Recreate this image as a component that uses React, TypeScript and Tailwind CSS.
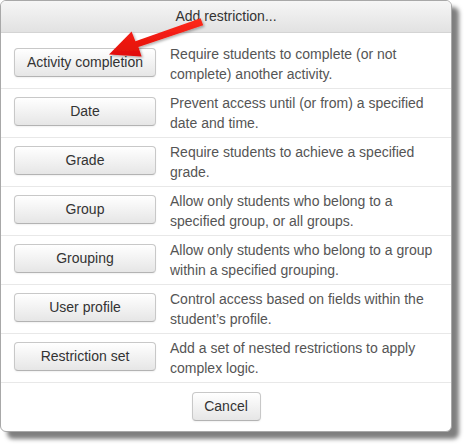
import React from "react";

const rows: { label: string; desc: string }[] = [
  { label: "Activity completion", desc: "Require students to complete (or not complete) another activity." },
  { label: "Date", desc: "Prevent access until (or from) a specified date and time." },
  { label: "Grade", desc: "Require students to achieve a specified grade." },
  { label: "Group", desc: "Allow only students who belong to a specified group, or all groups." },
  { label: "Grouping", desc: "Allow only students who belong to a group within a specified grouping." },
  { label: "User profile", desc: "Control access based on fields within the student\u2019s profile." },
  { label: "Restriction set", desc: "Add a set of nested restrictions to apply complex logic." },
];

function Btn({ children, className = "" }: { children: React.ReactNode; className?: string }) {
  return (
    <button
      className={
        "h-[29px] rounded-[4px] border border-[#c8c8c8] border-b-[#b3b3b3] bg-gradient-to-b from-white to-[#e6e6e6] text-[14px] leading-[19px] text-[#333] shadow-[0_1px_2px_rgba(0,0,0,0.06)] " +
        className
      }
    >
      {children}
    </button>
  );
}

export default function App() {
  return (
    <div className="relative w-[467px] h-[448px] bg-white overflow-hidden" style={{ fontFamily: '"Liberation Sans", Arial, sans-serif' }}>
      <div className="w-[452px] rounded-[6px] border border-[#a8a8a8] bg-white shadow-[7px_7px_4px_rgba(0,0,0,0.5)] overflow-hidden">
        <div className="h-[32px] flex items-center justify-center bg-gradient-to-b from-[#f6f6f6] to-[#e2e2e2] border-b border-[#d4d4d4] text-[14px] text-[#333]">
          Add restriction...
        </div>
        <div className="pt-[7px]">
          {rows.map((r, i) => (
            <div
              key={r.label}
              className={"flex items-start px-[13px] py-[4px] " + (i > 0 ? "border-t border-[#e8e8e8]" : "")}
            >
              <Btn className="mt-[4px] w-[142px] shrink-0">{r.label}</Btn>
              <div className="ml-[14px] w-[270px] text-[14px] leading-[20px] text-[#555]">{r.desc}</div>
            </div>
          ))}
        </div>
        <div className="border-t border-[#e8e8e8] flex justify-center pt-[9px] pb-[10px]">
          <Btn className="w-[69px]">Cancel</Btn>
        </div>
      </div>
      <svg className="absolute left-0 top-0 pointer-events-none" width="467" height="448" viewBox="0 0 467 448">
        <defs>
          <filter id="sh" x="-20%" y="-20%" width="140%" height="140%">
            <feDropShadow dx="1.5" dy="1.5" stdDeviation="1" floodColor="#000" floodOpacity="0.3" />
          </filter>
          <linearGradient id="rg" x1="0" y1="0" x2="0" y2="1">
            <stop offset="0" stopColor="#ff2a1a" />
            <stop offset="1" stopColor="#e00d0a" />
          </linearGradient>
        </defs>
        <polygon
          filter="url(#sh)"
          fill="url(#rg)"
          points="200.6,18.3 135.4,41.3 131.6,31.5 109,54.5 141.6,56.6 138.4,47.1 203.2,25.3"
          strokeLinejoin="round"
        />
      </svg>
    </div>
  );
}
